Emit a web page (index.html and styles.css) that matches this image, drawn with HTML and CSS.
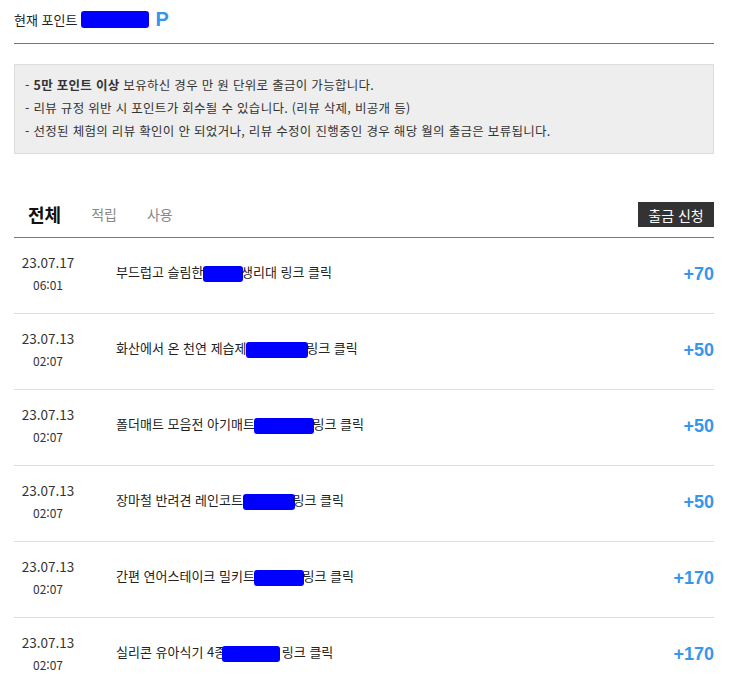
FILE: index.html
```html
<!DOCTYPE html>
<html lang="ko">
<head>
<meta charset="utf-8">
<link rel="stylesheet" href="styles.css">
</head>
<body>
<div class="wrap">
  <div class="point">
    <span class="point-label">현재 포인트</span>
    <span class="redact point-redact"></span>
    <span class="point-unit">P</span>
  </div>
  <div class="notice">
    <p>- <b>5만 포인트 이상</b> 보유하신 경우 만 원 단위로 출금이 가능합니다.</p>
    <p>- 리뷰 규정 위반 시 포인트가 회수될 수 있습니다. (리뷰 삭제, 비공개 등)</p>
    <p>- 선정된 체험의 리뷰 확인이 안 되었거나, 리뷰 수정이 진행중인 경우 해당 월의 출금은 보류됩니다.</p>
  </div>
  <div class="tabs">
    <span class="tab active">전체</span>
    <span class="tab">적립</span>
    <span class="tab">사용</span>
    <span class="btn">출금 신청</span>
  </div>
  <ul class="list">
    <li class="row">
      <div class="when"><span class="date">23.07.17</span><span class="time">06:01</span></div>
      <div class="title">부드럽고 슬림한 <span class="redact r1"></span>생리대 링크 클릭</div>
      <div class="amt">+70</div>
    </li>
    <li class="row">
      <div class="when"><span class="date">23.07.13</span><span class="time">02:07</span></div>
      <div class="title">화산에서 온 천연 제습제 <span class="redact r2"></span>링크 클릭</div>
      <div class="amt">+50</div>
    </li>
    <li class="row">
      <div class="when"><span class="date">23.07.13</span><span class="time">02:07</span></div>
      <div class="title">폴더매트 모음전 아기매트 <span class="redact r3"></span>링크 클릭</div>
      <div class="amt">+50</div>
    </li>
    <li class="row">
      <div class="when"><span class="date">23.07.13</span><span class="time">02:07</span></div>
      <div class="title">장마철 반려견 레인코트 <span class="redact r4"></span>링크 클릭</div>
      <div class="amt">+50</div>
    </li>
    <li class="row">
      <div class="when"><span class="date">23.07.13</span><span class="time">02:07</span></div>
      <div class="title">간편 연어스테이크 밀키트 <span class="redact r5"></span>링크 클릭</div>
      <div class="amt">+170</div>
    </li>
    <li class="row">
      <div class="when"><span class="date">23.07.13</span><span class="time">02:07</span></div>
      <div class="title">실리콘 유아식기 4종<span class="redact r6"></span> 링크 클릭</div>
      <div class="amt">+170</div>
    </li>
  </ul>
</div>
</body>
</html>
```
FILE: styles.css
```css
* { box-sizing: border-box; }
html, body { margin: 0; padding: 0; background: #fff; }
body {
  font-family: "Noto Sans CJK KR", "Noto Sans", sans-serif;
  color: #222;
  overflow: hidden;
}
.wrap {
  width: 700px;
  margin-left: 14px;
}
.point {
  height: 44px;
  border-bottom: 1px solid #777;
  display: flex;
  align-items: center;
  padding-bottom: 4px;
}
.point-label {
  font-size: 13px;
  color: #222;
}
.redact {
  display: inline-block;
  background: #0000ff;
  border-radius: 3px;
  vertical-align: middle;
}
.point-redact {
  width: 68px;
  height: 17px;
  margin-left: 4px;
}
.point-unit {
  font-family: "Liberation Sans", Arial, sans-serif;
  font-weight: bold;
  font-size: 20px;
  color: #3497ea;
  margin-left: 6px;
}
.notice {
  margin-top: 20px;
  background: #eeeeee;
  border: 1px solid #dddddd;
  padding: 8px 10px 10px 10px;
  height: 90px;
}
.notice p {
  margin: 0;
  font-size: 12.5px;
  letter-spacing: 0.3px;
  line-height: 23px;
  color: #333;
}
.notice b { color: #333; }
.tabs {
  margin-top: 48px;
  height: 36px;
  border-bottom: 1px solid #777;
  display: flex;
  align-items: flex-start;
  padding-left: 14px;
}
.tab {
  font-size: 14px;
  color: #888;
  margin-right: 30px;
  line-height: 24px;
  padding-top: 0;
}
.tab.active {
  font-size: 18px;
  font-weight: bold;
  color: #111;
  line-height: 24px;
  padding-top: 0;
}
.btn {
  margin-left: auto;
  background: #333;
  color: #fff;
  font-size: 14px;
  height: 25px;
  width: 76px;
  display: flex;
  align-items: center;
  justify-content: center;
  margin-top: 0;
}
.list {
  list-style: none;
  margin: 0;
  padding: 0;
}
.row {
  height: 76px;
  border-bottom: 1px solid #dddddd;
  display: flex;
  align-items: center;
}
.when {
  width: 68px;
  display: flex;
  flex-direction: column;
  align-items: center;
  color: #333;
  margin-top: -4px;
}
.date { font-size: 13.5px; line-height: 20px; }
.time { font-size: 12px; line-height: 20px; margin-top: 3px; }
.title {
  margin-left: 34px;
  font-size: 13px;
  color: #222;
  flex: 1;
  margin-top: -7px;
}
.title .redact { height: 16px; margin-left: -4px; margin-right: -2px; }
.r1 { width: 40px; }
.r2 { width: 62px; }
.r3 { width: 60px; }
.r4 { width: 52px; }
.r5 { width: 50px; }
.r6 { width: 58px; }
.amt {
  font-family: "Liberation Sans", Arial, sans-serif;
  font-weight: bold;
  font-size: 18px;
  color: #3497ea;
  margin-top: -2px;
}
```
